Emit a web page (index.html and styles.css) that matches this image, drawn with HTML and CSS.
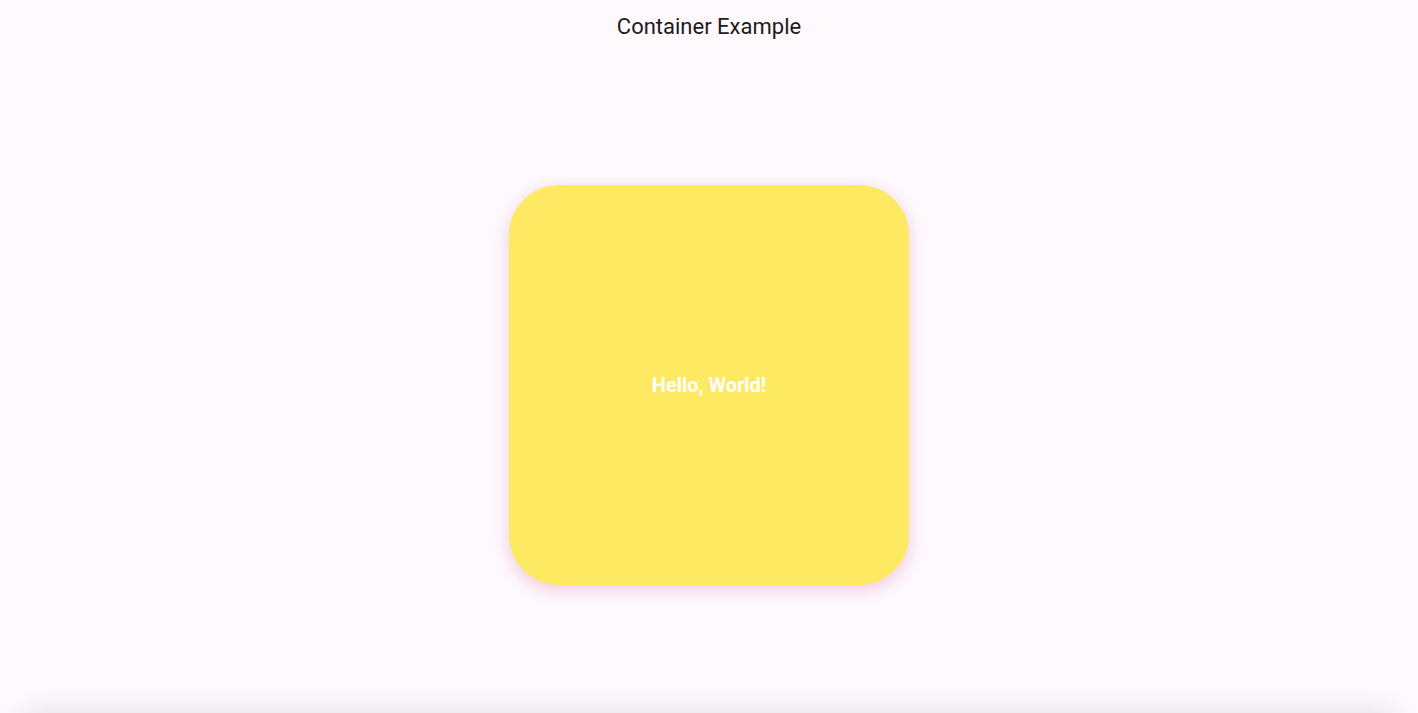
FILE: index.html
```html
<!DOCTYPE html>
<html lang="en">
<head>
<meta charset="utf-8">
<title>Container Example</title>
<link rel="stylesheet" href="styles.css">
</head>
<body>
<div class="app">
  <header class="app-bar">
    <h1 class="app-title">Container Example</h1>
  </header>
  <main class="body">
    <div class="card">
      <span class="card-text">Hello, World!</span>
    </div>
  </main>
  <div class="bottom-shadow"></div>
</div>
</body>
</html>
```

FILE: styles.css
```css
html, body {
  margin: 0;
  padding: 0;
  height: 100%;
  overflow: hidden;
}
body {
  background: #fdf9fd;
  font-family: Roboto, "Noto Sans", "Liberation Sans", sans-serif;
}
.app {
  position: relative;
  height: 100vh;
  display: flex;
  flex-direction: column;
  overflow: hidden;
}
.app-bar {
  height: 56px;
  flex: 0 0 56px;
  display: flex;
  align-items: center;
  justify-content: center;
}
.app-title {
  margin: 0;
  font-size: 22px;
  font-weight: 400;
  color: #1d1b20;
  line-height: 28px;
  transform: translateY(-1px);
}
.body {
  flex: 1;
  display: flex;
  align-items: center;
  justify-content: center;
}
.card {
  width: 400px;
  height: 400px;
  border-radius: 50px;
  background: #fee963;
  box-shadow: 0 5px 14px 2px rgba(225, 130, 175, 0.32);
  display: flex;
  align-items: center;
  justify-content: center;
}
.card-text {
  color: #ffffff;
  font-size: 20px;
  font-weight: 700;
}
.bottom-shadow {
  position: absolute;
  left: 20px;
  right: 20px;
  bottom: -40px;
  height: 40px;
  border-radius: 20px;
  box-shadow: 0 0 30px rgba(0, 0, 0, 0.12);
}
```
